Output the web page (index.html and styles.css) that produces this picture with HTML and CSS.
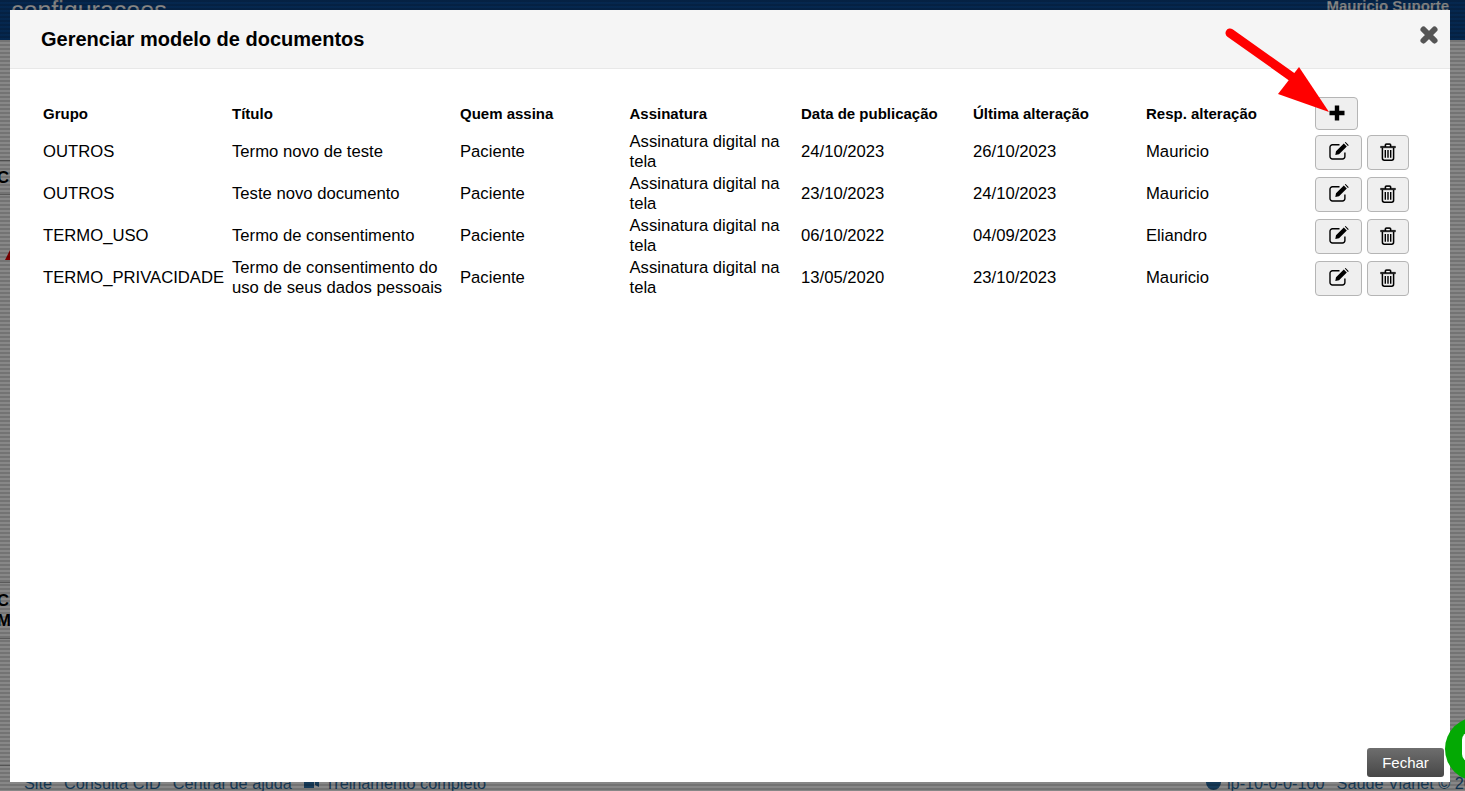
FILE: index.html
```html
<!DOCTYPE html>
<html lang="pt-BR">
<head>
<meta charset="utf-8">
<title>Gerenciar modelo de documentos</title>
<link rel="stylesheet" href="styles.css">
</head>
<body>
<div class="page">
  <header class="topbar">
    <span class="brand">configuracoes</span>
    <span class="user">Mauricio Suporte</span>
  </header>
  <main class="behind">
    <div class="behind-row one">C</div>
    <div class="warn"></div>
    <div class="behind-row two">C<br>M</div>
  </main>
  <footer class="foot">
    <div class="foot-links"><span>Site</span><span>Consulta CID</span><span>Central de ajuda</span><span class="train"><svg class="f-ico" width="15" height="12" viewBox="0 0 15 12"><path d="M0 1h10v10H0zM11 4l4-2v8l-4-2z" fill="currentColor"/></svg>Treinamento completo</span></div>
    <div class="foot-right"><span class="ip"><svg class="f-ico" width="15" height="15" viewBox="0 0 15 15"><circle cx="7.500" cy="7.500" r="7.500" fill="currentColor"/></svg>ip-10-0-0-100</span><span>Saúde Vianet © 2023</span></div>
  </footer>
</div>
<div class="backdrop"></div>
<div class="chat"><div class="chat-in"></div></div>
<section class="modal">
  <div class="modal-head">
    <h3>Gerenciar modelo de documentos</h3>
    <svg class="close" width="20" height="20" viewBox="0 0 20 20"><path d="M4.500 4.500 15.500 15.500M15.500 4.500 4.500 15.500" stroke="#555" stroke-width="6" stroke-linecap="round"/></svg>
  </div>
  <div class="modal-body">
    <table class="docs">
      <thead>
        <tr>
          <th class="c1">Grupo</th><th class="c2">Título</th><th class="c3">Quem assina</th><th class="c4">Assinatura</th><th class="c5">Data de publicação</th><th class="c6">Última alteração</th><th class="c7">Resp. alteração</th>
          <th class="c8"><button class="btn add"><svg class="plus" width="16" height="16" viewBox="0 0 16 16"><path d="M5.800 .5h4.400v5.300h5.300v4.400h-5.300v5.300H5.800v-5.300H.5V5.800h5.300z"/></svg></button></th>
        </tr>
      </thead>
      <tbody>
        <tr><td>OUTROS</td><td>Termo novo de teste</td><td>Paciente</td><td>Assinatura digital na tela</td><td>24/10/2023</td><td>26/10/2023</td><td>Mauricio</td>
          <td class="acts"><button class="btn edit"><svg class="ico" viewBox="0 0 20 18"><use href="#i-edit"/></svg></button><button class="btn del"><svg class="ico trash" viewBox="0 0 16 18"><use href="#i-trash"/></svg></button></td></tr>
        <tr><td>OUTROS</td><td>Teste novo documento</td><td>Paciente</td><td>Assinatura digital na tela</td><td>23/10/2023</td><td>24/10/2023</td><td>Mauricio</td>
          <td class="acts"><button class="btn edit"><svg class="ico" viewBox="0 0 20 18"><use href="#i-edit"/></svg></button><button class="btn del"><svg class="ico trash" viewBox="0 0 16 18"><use href="#i-trash"/></svg></button></td></tr>
        <tr><td>TERMO_USO</td><td>Termo de consentimento</td><td>Paciente</td><td>Assinatura digital na tela</td><td>06/10/2022</td><td>04/09/2023</td><td>Eliandro</td>
          <td class="acts"><button class="btn edit"><svg class="ico" viewBox="0 0 20 18"><use href="#i-edit"/></svg></button><button class="btn del"><svg class="ico trash" viewBox="0 0 16 18"><use href="#i-trash"/></svg></button></td></tr>
        <tr><td>TERMO_PRIVACIDADE</td><td>Termo de consentimento do uso de seus dados pessoais</td><td>Paciente</td><td>Assinatura digital na tela</td><td>13/05/2020</td><td>23/10/2023</td><td>Mauricio</td>
          <td class="acts"><button class="btn edit"><svg class="ico" viewBox="0 0 20 18"><use href="#i-edit"/></svg></button><button class="btn del"><svg class="ico trash" viewBox="0 0 16 18"><use href="#i-trash"/></svg></button></td></tr>
      </tbody>
    </table>
  </div>
  <div class="modal-foot"><button class="fechar">Fechar</button></div>
</section>
<svg class="arrow" width="120" height="100" viewBox="0 0 120 100"><path d="M9 8 L71 52" stroke="#f00" stroke-width="9" stroke-linecap="round" fill="none"/><path d="M78 42 L108 87 L57 69 Z" fill="#f00"/></svg>
<svg class="defs" width="0" height="0">
  <symbol id="i-edit" viewBox="0 0 20 18">
    <path d="M10.500 2.800H3.500A2.400 2.400 0 0 0 1 5.200v9.400A2.400 2.400 0 0 0 3.500 17h10a2.400 2.400 0 0 0 2.400-2.400v-4" fill="none" stroke="#000" stroke-width="1.400"/>
    <path d="M7 9.200 14.800 1.400 17.800 4.400 10 12.200 6.300 13zM15.800.6 16.600 0 19.800 3.200 18.900 4z" fill="#000"/>
  </symbol>
  <symbol id="i-trash" viewBox="0 0 16 18">
    <path d="M.5 3.300h15v1.500H.5zM4.800 3.300V2Q4.800.5 6.300.5h3.400q1.500 0 1.500 1.500v1.300" fill="#000" stroke="#000" stroke-width=".4"/>
    <path d="M6.200 1.900h3.600v1.400H6.200z" fill="#fff"/>
    <path d="M2.400 4.800v10.500q0 1.900 1.900 1.900h7.400q1.900 0 1.900-1.900V4.800" fill="none" stroke="#000" stroke-width="1.500"/>
    <path d="M5.300 7v7.800M8 7v7.800M10.700 7v7.800" stroke="#000" stroke-width="1.400"/>
  </symbol>
</svg>
</body>
</html>
```
FILE: styles.css
```css
* { box-sizing: border-box; }
html, body { margin: 0; height: 100%; overflow: hidden; }
body { font-family: "Liberation Sans", Arial, sans-serif; font-size: 16.66px; color: #000; background: #fff; }

.page { display: flex; flex-direction: column; height: 791px; }
.topbar { height: 40px; background: #0a4a94; display: flex; justify-content: space-between; overflow: hidden; flex: none; padding: 0 16px 0 11px; }
.brand { font-size: 25px; color: #fff; line-height: 20px; }
.user { font-size: 15px; font-weight: bold; color: #fff; line-height: 11px; }
.behind { flex: 1; position: relative; font-weight: bold; }
.behind-row { position: absolute; left: -3px; width: 13px; line-height: 20px; overflow: hidden; border-top: 1px solid #aaa; border-bottom: 1px solid #aaa; }
.behind-row.one { top: 120px; height: 35px; padding-top: 7px; }
.behind-row.two { top: 542px; height: 57px; padding-top: 8px; }
.warn { position: absolute; left: 5px; top: 210px; border: 5px solid transparent; border-bottom: 10px solid #e00; border-top: 0; }
.foot { height: 26px; flex: none; display: flex; justify-content: space-between; color: #2a6fa8; font-size: 16.25px; border-top: 1px solid #bbb; padding: 8px 0 0 24px; white-space: nowrap; overflow: hidden; line-height: 18px; }
.foot-links { display: flex; gap: 12px; }
.foot-right { display: flex; gap: 12px; margin-right: -26px; }
.train, .ip { display: inline-flex; align-items: center; gap: 6px; }

.backdrop { position: absolute; inset: 0; background: repeating-linear-gradient(180deg, rgba(0,0,0,.55) 0 2px, rgba(0,0,0,.47) 2px 4px); }

.modal { position: absolute; left: 10px; top: 10px; width: 1440px; height: 772px; background: #fff; display: flex; flex-direction: column; }
.modal-head { height: 59px; background: #f5f5f5; border-bottom: 1px solid #e8e8e8; padding: 0 11px 0 31px; display: flex; justify-content: space-between; flex: none; }
.modal-head h3 { margin: 0; font-size: 20px; line-height: 58px; font-weight: bold; }
.close { margin-top: 15px; flex: none; }
.modal-body { flex: 1; padding: 28px 0 0 29px; }
.docs { border-collapse: separate; border-spacing: 0; table-layout: fixed; width: 1372px; }
.docs th { text-align: left; font-size: 15px; font-weight: bold; padding: 0 4px 2px; height: 34px; vertical-align: middle; }
.docs td { padding: 0 4px; height: 42px; line-height: 20px; vertical-align: middle; }
.docs th.c8 { padding: 0 4px 1px; vertical-align: top; line-height: 0; }
.docs td.acts { padding: 1px 0 0 4px; white-space: nowrap; line-height: 0; font-size: 0; }
.c1 { width: 189px; } .c2 { width: 228px; } .c3 { width: 169.5px; } .c4 { width: 171.5px; } .c5 { width: 172px; } .c6 { width: 173px; } .c7 { width: 169px; } .c8 { width: 100px; }
.btn { display: inline-flex; align-items: center; justify-content: center; background: #efefef; border: 1px solid #b5b5b5; border-radius: 4px; padding: 0; height: 35px; vertical-align: top; }
.add { width: 43px; height: 33px; }
.plus { margin-top: -2px; }
.edit { width: 47px; margin-right: 5px; }
.del { width: 42px; }
.ico { width: 20px; height: 18px; margin-top: -3px; }
.ico.trash { width: 16px; height: 18px; margin-top: -2px; }
.modal-foot { flex: none; display: flex; justify-content: flex-end; padding: 0 6px 5px 0; }
.fechar { width: 77px; height: 29px; border: 0; border-radius: 3px; background: linear-gradient(#6e6e6e, #474747); color: #fff; font: 15px "Liberation Sans", Arial, sans-serif; }

.chat { position: absolute; left: 1445px; top: 717px; width: 64px; height: 64px; border-radius: 50%; background: #04a904; z-index: 2; }
.chat-in { position: absolute; left: 17px; top: 15px; width: 32px; height: 30px; background: #fff; border-radius: 8px; }
.arrow { position: absolute; left: 1221px; top: 25px; z-index: 3; }
.defs { position: absolute; }
```
